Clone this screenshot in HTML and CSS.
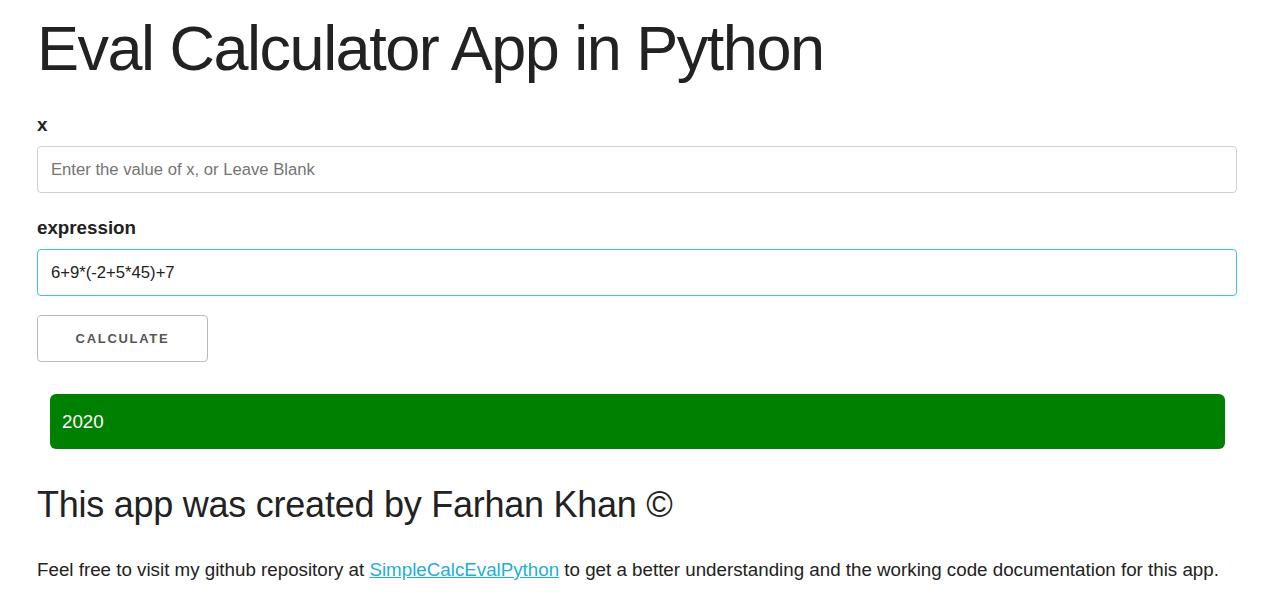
FILE: index.html
```html
<!DOCTYPE html>
<html>
<head>
<meta charset="utf-8">
<title>Eval Calculator App in Python</title>
<link rel="stylesheet" href="styles.css">
</head>
<body>
<div class="container">
  <h1 class="title">Eval Calculator App in Python</h1>
  <form class="calc-form">
    <label class="field-label" for="x">x</label>
    <input class="field" id="x" type="text" placeholder="Enter the value of x, or Leave Blank">
    <label class="field-label label-gap" for="expr">expression</label>
    <input class="field field-focus" id="expr" type="text" value="6+9*(-2+5*45)+7">
    <button class="btn" type="button">Calculate</button>
  </form>
  <div class="result">2020</div>
  <h2 class="credit">This app was created by Farhan Khan ©</h2>
  <p class="note">Feel free to visit my github repository at <a href="#">SimpleCalcEvalPython</a> to get a better understanding and the working code documentation for this app.</p>
</div>
</body>
</html>
```

FILE: styles.css
```css
html, body {
  margin: 0;
  padding: 0;
  background: #fff;
}
body {
  font-family: "Liberation Sans", Arial, sans-serif;
  color: #222;
}
.container {
  width: 1200px;
  padding: 10px 0 0 37px;
  display: flex;
  flex-direction: column;
}
.title {
  margin: 0;
  font-size: 63px;
  font-weight: 400;
  line-height: 76px;
  letter-spacing: -1.5px;
}
.calc-form {
  display: flex;
  flex-direction: column;
  align-items: flex-start;
  margin-top: 25px;
}
.field-label {
  font-size: 18.75px;
  font-weight: 700;
  line-height: 27px;
  margin-bottom: 8px;
}
.label-gap {
  margin-top: 21px;
}
.field {
  box-sizing: border-box;
  width: 1200px;
  height: 47px;
  margin: 0;
  padding: 0 13px;
  border: 1px solid #D1D1D1;
  border-radius: 4px;
  font-family: "Liberation Sans", Arial, sans-serif;
  font-size: 16.67px;
  color: #222;
  background: #fff;
  outline: none;
}
.field::placeholder {
  color: #757575;
}
.field-focus {
  border-color: #33C3F0;
}
.btn {
  box-sizing: border-box;
  margin-top: 19px;
  height: 47px;
  width: 171px;
  padding: 0;
  border: 1px solid #bbb;
  border-radius: 4px;
  background: transparent;
  color: #555;
  font-family: "Liberation Sans", Arial, sans-serif;
  font-size: 13px;
  font-weight: 700;
  letter-spacing: 1.7px;
  text-transform: uppercase;
  text-align: center;
}
.result {
  box-sizing: border-box;
  margin: 32px 0 0 13px;
  width: 1175px;
  height: 55px;
  padding: 0 12px;
  display: flex;
  align-items: center;
  background: #008000;
  color: #fff;
  border-radius: 6px;
  font-size: 18.75px;
}
.credit {
  margin: 34px 0 0;
  font-size: 36px;
  font-weight: 400;
  line-height: 44px;
  letter-spacing: -0.25px;
}
.note {
  margin: 29px 0 0;
  font-size: 18.75px;
  line-height: 28px;
}
.note a {
  color: #1EAEDB;
}
```
